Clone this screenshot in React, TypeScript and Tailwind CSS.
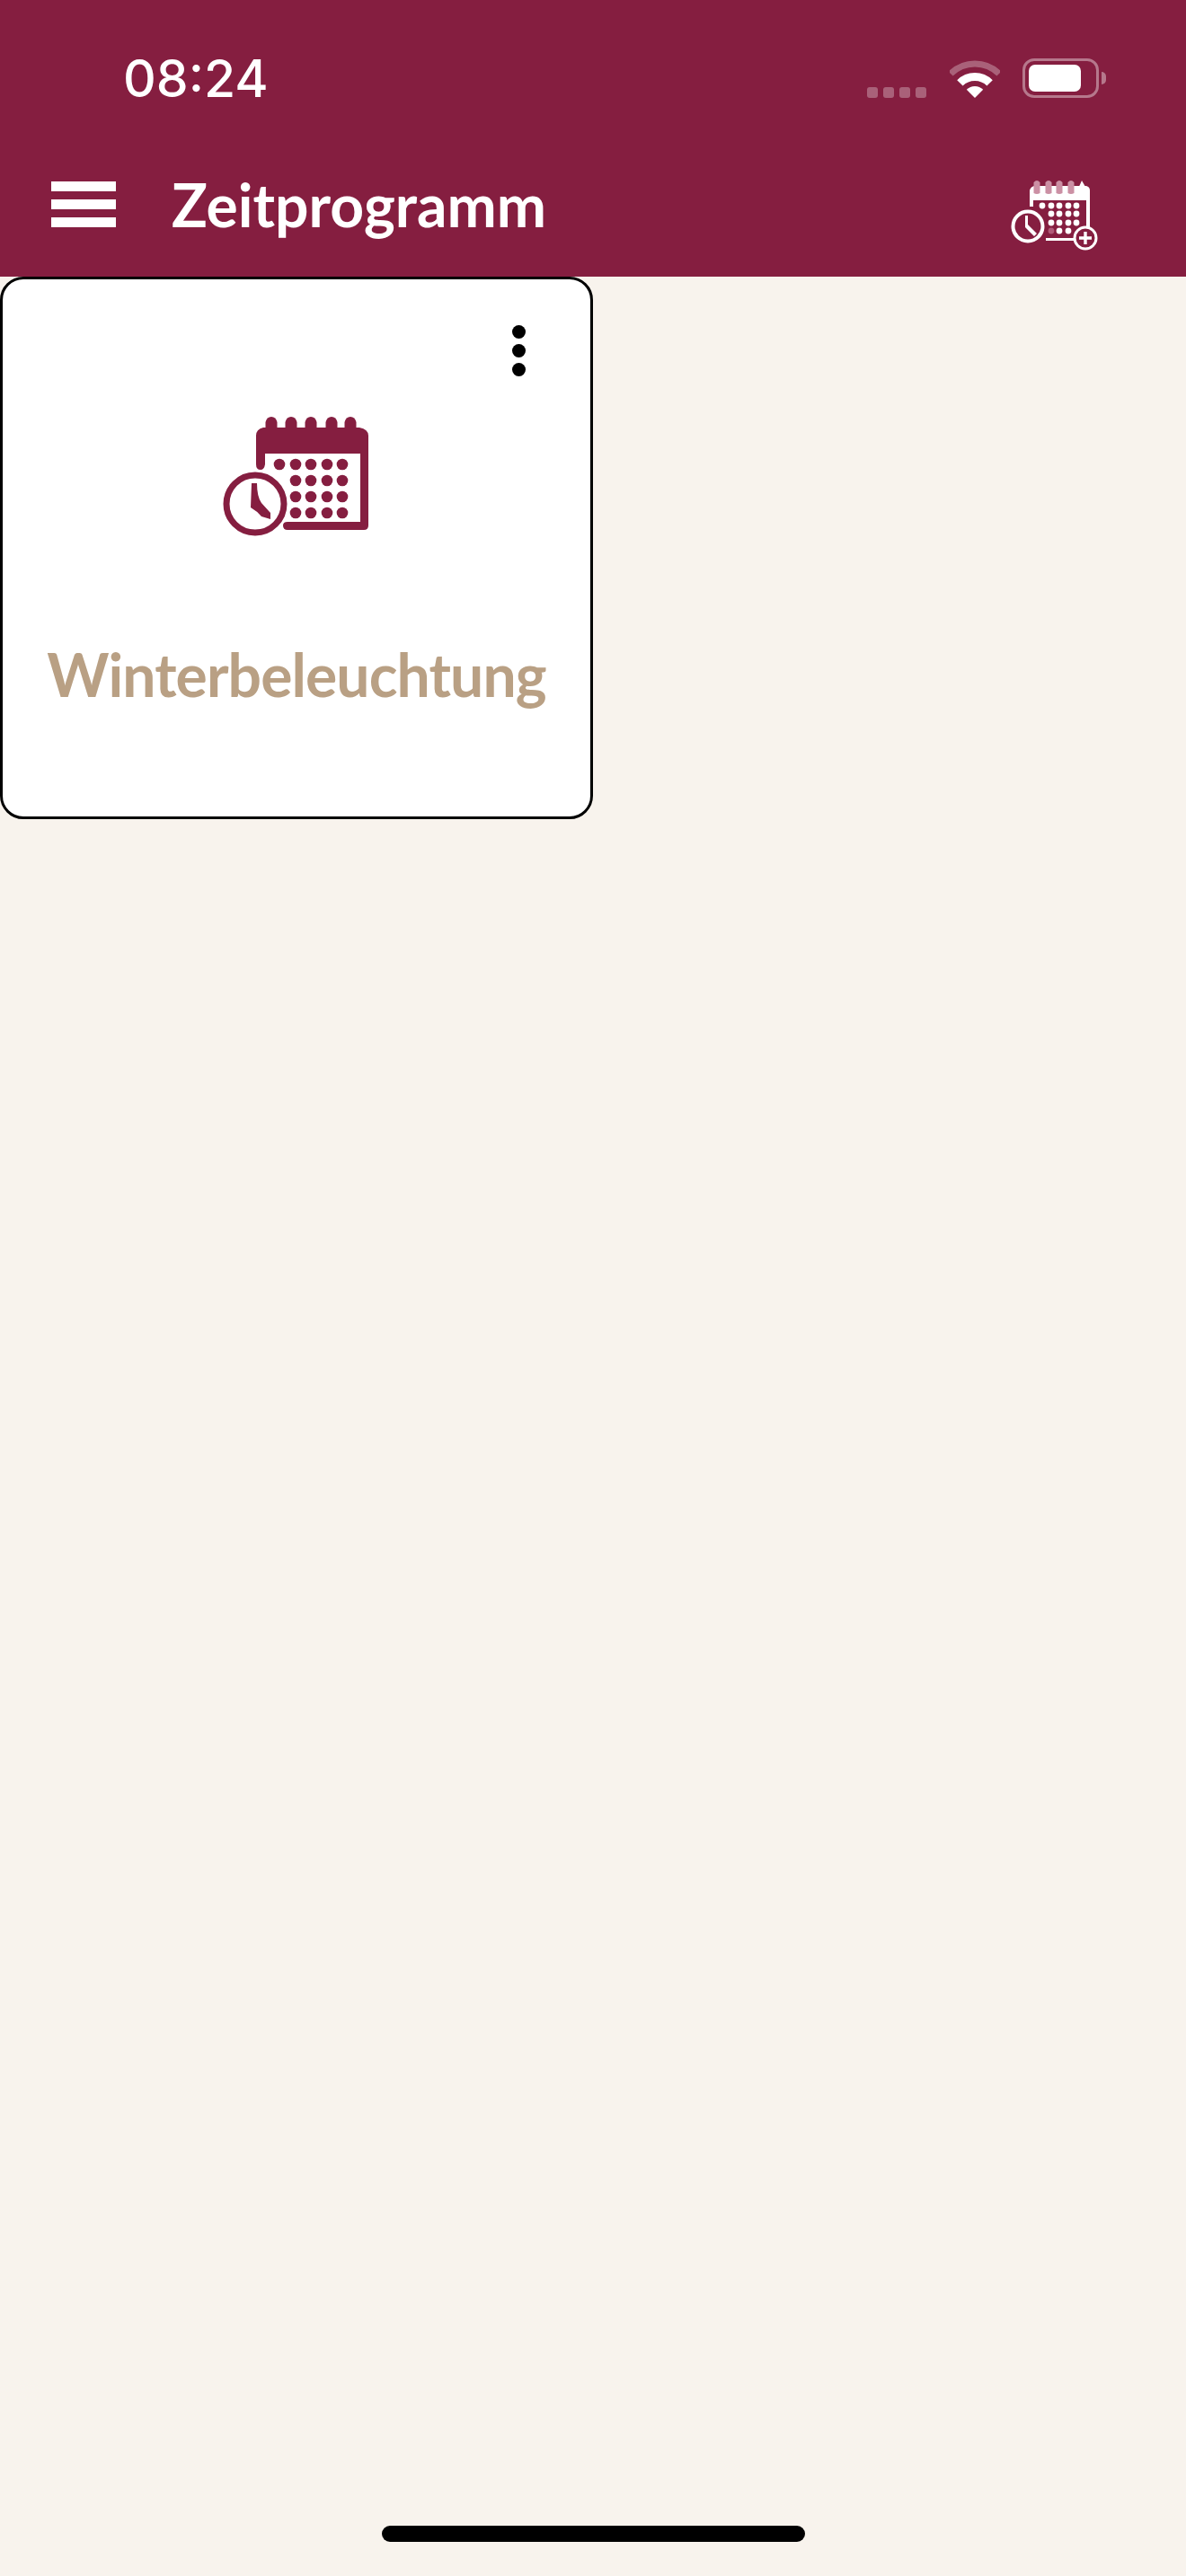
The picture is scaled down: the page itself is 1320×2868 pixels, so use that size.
const dotRows = [
  [63, 81, 98, 116, 133],
  [81, 98, 116, 133],
  [81, 98, 116, 133],
  [81, 98, 116, 133],
];
const dotRowsY = [54, 72, 90, 108];

function CalendarIcon() {
  const rings = [54, 76, 98, 121, 142];
  return (
    <svg width="162" height="134" viewBox="0 0 162 134" fill="#851e40">
      {rings.map((x) => (
        <path key={x} d={`M${x - 6.5} 16 V7 Q${x - 5} 1 ${x} 1 Q${x + 5} 1 ${x + 6.5} 7 V16 Z`} />
      ))}
      <path d="M37 22 Q37 15 45 13 H152 Q162 15 162 22 V122 Q162 127 157 127 L72 127 Q67 127 67 122 Q67 118 72 118 H153 V42 H47 V54 Q46 60 42 60 Q37 60 37 54 Z" />
      {dotRows.map((row, i) =>
        row.map((x) => <circle key={`${i}-${x}`} cx={x} cy={dotRowsY[i]} r="6.3" />),
      )}
      <circle cx="36" cy="98" r="32" fill="#fff" stroke="#851e40" strokeWidth="7" />
      <path d="M32 75 H38 Q38 90 43 97 L53 108 V115 L43 112 Q38 106 31 102 Z" />
    </svg>
  );
}

function AddScheduleIcon() {
  const rings = [30, 43, 55, 68];
  const rows = [
    [36, 46, 55, 65, 74],
    [46, 55, 65, 74],
    [46, 55, 65, 74],
    [55, 65],
  ];
  const rowY = [29, 38, 48, 57];
  return (
    <svg width="99" height="79" viewBox="0 0 99 79" fill="#fff">
      <path d="M22 12 Q23 8 27 7 H85 Q89 8 89 12 V66 Q89 68 87 68 H40 V65 H85 V23 H26 V30 H22 Z" />
      {rings.map((x) => (
        <path key={x} d={`M${x - 3.5} 15 V3 Q${x} -1 ${x + 3.5} 3 V15 Q${x} 17 ${x - 3.5} 15 Z`} fill="#cb90a4" />
      ))}
      <path d="M76 10 L80 1 L84 8 V12 H76 Z" />
      {rows.map((row, i) =>
        row.map((x) => <circle key={`${i}-${x}`} cx={x} cy={rowY[i]} r="3.4" />),
      )}
      <circle cx="46" cy="57" r="3.4" fill="#b05a78" />
      <circle cx="20" cy="52" r="16.5" fill="#851e40" stroke="#fff" strokeWidth="4" />
      <path d="M17 40 H20 V50 L30 60 L27 63 L17 53 Z" />
      <circle cx="84" cy="65" r="12" fill="#851e40" stroke="#fff" strokeWidth="3" />
      <path d="M84 58 V72 M77 65 H91" stroke="#fff" strokeWidth="3.4" fill="none" />
    </svg>
  );
}

function WifiIcon() {
  return (
    <svg width="56" height="42" viewBox="0 0 56 42" fill="none">
      <path d="M1.1 15.1 A38 38 0 0 1 54.9 15.1" stroke="#fff" strokeOpacity="0.3" strokeWidth="7" />
      <path d="M11.4 25.4 A23.5 23.5 0 0 1 44.6 25.4" stroke="#fff" strokeWidth="9" />
      <path d="M28 42 L18.8 32.8 A13 13 0 0 1 37.2 32.8 Z" fill="#fff" />
    </svg>
  );
}

export default function App() {
  return (
    <div className="flex min-h-[2868px] flex-col bg-[#f8f3ed] font-['Lato',sans-serif]">
      <header className="h-[308px] bg-[#851e40] text-white">
        <div className="flex items-start justify-between pt-[65px] pr-[89px] pl-[137px]">
          <span className="font-['Inter',sans-serif] text-[57px] leading-[46px] font-medium">08:24</span>
          <div className="flex items-start">
            <div className="mt-[32px] flex gap-[6px]">
              <span className="h-[12px] w-[12px] rounded-[3px] bg-white/30" />
              <span className="h-[12px] w-[12px] rounded-[3px] bg-white/30" />
              <span className="h-[12px] w-[12px] rounded-[3px] bg-white/30" />
              <span className="h-[12px] w-[12px] rounded-[3px] bg-white/30" />
            </div>
            <div className="mt-[2px] ml-[26px]">
              <WifiIcon />
            </div>
            <div className="ml-[25px] flex items-center">
              <div className="h-[44px] w-[85px] rounded-[13px] border-[3px] border-white/40 p-[4px]">
                <div className="h-full w-[58px] rounded-[7px] bg-white" />
              </div>
              <span className="ml-[3px] h-[14px] w-[5px] rounded-r-full bg-white/40" />
            </div>
          </div>
        </div>
        <div className="mt-[89px] flex items-start pr-[97px] pl-[57px]">
          <button className="mt-[2px] flex w-[72px] flex-col gap-[9px]">
            <span className="h-[11px] bg-white" />
            <span className="h-[11px] bg-white" />
            <span className="h-[11px] bg-white" />
          </button>
          <h1 className="-mt-[3px] ml-[62px] text-[66px] leading-[62px] font-bold">Zeitprogramm</h1>
          <div className="ml-auto">
            <AddScheduleIcon />
          </div>
        </div>
      </header>

      <main className="grid flex-1 grid-cols-2 content-start">
        <section className="flex h-[604px] flex-col items-center rounded-[26px] border-[3px] border-black bg-white">
          <div className="mt-[51px] flex flex-col gap-[6px] self-end pr-[72px]">
            <span className="h-[15px] w-[15px] rounded-full bg-black" />
            <span className="h-[15px] w-[15px] rounded-full bg-black" />
            <span className="h-[15px] w-[15px] rounded-full bg-black" />
          </div>
          <div className="mt-[44px] -ml-[2px]">
            <CalendarIcon />
          </div>
          <p className="mt-[123px] text-[66px] leading-[62px] font-bold tracking-[-0.9px] text-[#b9a084]">
            Winterbeleuchtung
          </p>
        </section>
      </main>

      <div className="mb-[38px] flex justify-center">
        <span className="h-[18px] w-[471px] rounded-full bg-black" />
      </div>
    </div>
  );
}
